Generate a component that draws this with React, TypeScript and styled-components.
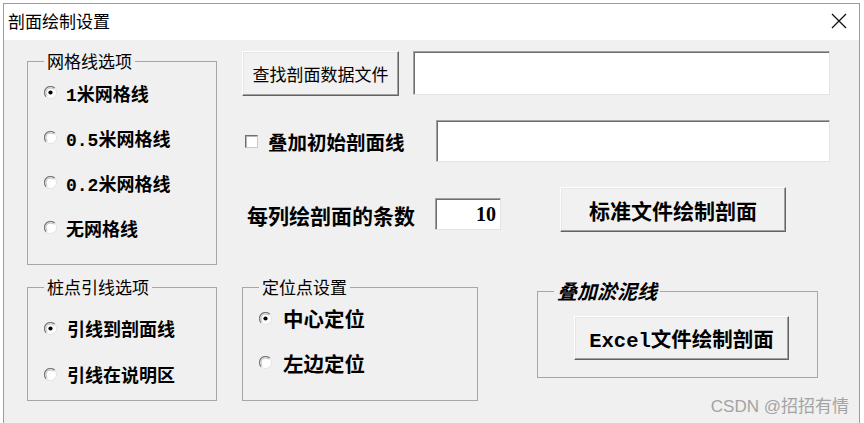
import React from 'react';
import styled, { createGlobalStyle } from 'styled-components';

const CJK = '"Noto Sans CJK SC", "Liberation Sans", sans-serif';
const MIXED = '"Liberation Mono", "Noto Sans CJK SC", monospace';

const GlobalStyle = createGlobalStyle`
  html, body {
    margin: 0;
    padding: 0;
    background: #ffffff;
    overflow: hidden;
  }
  body {
    font-family: ${CJK};
    color: #000;
  }
`;

const Window = styled.div`
  position: relative;
  margin: 3px 0 0 3px;
  width: 857px;
  height: 420px;
  box-sizing: border-box;
  border: 1px solid #9c9c9c;
  border-bottom: none;
  background: #f0f0f0;
  display: flex;
  flex-direction: column;
`;

const TitleBar = styled.div`
  height: 36px;
  flex: none;
  background: #ffffff;
  display: flex;
  align-items: center;
  justify-content: space-between;
  padding: 0 12px 3px 4px;
  box-sizing: border-box;
`;

const Title = styled.span`
  font-size: 17px;
  line-height: 20px;
`;

const Body = styled.div`
  display: flex;
  padding: 12px 0 0 23px;
`;

const LeftCol = styled.div`
  width: 190px;
  display: flex;
  flex-direction: column;
  gap: 13px;
`;

const RightCol = styled.div`
  margin: -1px 0 0 25px;
  width: 588px;
  display: flex;
  flex-direction: column;
`;

// group box (fieldset) with etched border
const Group = styled.fieldset<{ $w: number; $h: number; $top?: number }>`
  margin: 0;
  padding: ${(p) => p.$top || 0}px 0 0 16px;
  width: ${(p) => p.$w}px;
  height: ${(p) => p.$h}px;
  box-sizing: border-box;
  border: 1px solid #a6a6a6;
  min-width: 0;
`;

const Legend = styled.legend<{ $italic?: boolean }>`
  margin-left: 0;
  padding: 0 3px;
  font-size: ${(p) => (p.$italic ? '20px' : '17px')};
  line-height: ${(p) => (p.$italic ? '22px' : '18px')};
  font-weight: ${(p) => (p.$italic ? 700 : 400)};
  font-style: ${(p) => (p.$italic ? 'italic' : 'normal')};
`;

const OptionRow = styled.label<{ $h: number; $gap: number; $size: number }>`
  display: flex;
  align-items: center;
  height: ${(p) => p.$h}px;
  gap: ${(p) => p.$gap}px;
  font-family: ${MIXED};
  font-size: ${(p) => p.$size}px;
  font-weight: 700;
  white-space: nowrap;
`;

const OptionList = styled.div<{ $top: number }>`
  display: flex;
  flex-direction: column;
  padding-top: ${(p) => p.$top}px;
`;

const Button = styled.button<{ $w: number; $h: number; $bold?: boolean; $size: number }>`
  width: ${(p) => p.$w}px;
  height: ${(p) => p.$h}px;
  flex: none;
  padding: 0;
  background: #f1f1f1;
  border: 1px solid;
  border-color: #ffffff #646464 #646464 #ffffff;
  box-shadow: inset -1px -1px #a0a0a0, inset 1px 1px #e6e6e6;
  font-family: ${MIXED};
  font-size: ${(p) => p.$size}px;
  font-weight: ${(p) => (p.$bold ? 700 : 400)};
  color: #000;
  white-space: nowrap;
`;

const TextBox = styled.div<{ $w: number; $h: number }>`
  width: ${(p) => p.$w}px;
  height: ${(p) => p.$h}px;
  flex: none;
  box-sizing: border-box;
  background: #ffffff;
  border: 1px solid;
  border-color: #a0a0a0 #e3e3e3 #e3e3e3 #a0a0a0;
  box-shadow: inset 1px 1px #6e6e6e;
`;

const NumberBox = styled(TextBox)`
  margin-top: 11px;
  display: flex;
  align-items: center;
  justify-content: flex-end;
  padding-right: 4px;
  font-family: "Liberation Serif", serif;
  font-size: 20px;
  font-weight: 700;
`;

const Row = styled.div<{ $top: number; $h: number }>`
  display: flex;
  align-items: flex-start;
  margin-top: ${(p) => p.$top}px;
  height: ${(p) => p.$h}px;
`;

const CheckLabel = styled.label`
  width: 194px;
  display: flex;
  align-items: center;
  gap: 10px;
  padding: 0 0 0 3px;
  height: 42px;
  font-size: 19.5px;
  font-weight: 700;
  white-space: nowrap;
`;

const CheckBox = styled.span`
  width: 13px;
  height: 13px;
  box-sizing: border-box;
  background: #fff;
  border: 1px solid;
  border-color: #6f6f6f #c8c8c8 #c8c8c8 #6f6f6f;
  box-shadow: inset 1px 1px #b4b4b4;
  flex: none;
`;

const CountLabel = styled.span`
  width: 188px;
  padding-left: 5px;
  margin-top: 14px;
  font-size: 21px;
  line-height: 29px;
  font-weight: 700;
  white-space: nowrap;
`;

const Watermark = styled.div`
  position: absolute;
  right: 10px;
  bottom: 6px;
  font-family: "Liberation Sans", "Noto Sans CJK SC", sans-serif;
  font-size: 17px;
  color: #a3a3a3;
`;

function Radio(props: { checked?: boolean }) {
  return (
    <svg width="13" height="13" viewBox="0 0 13 13" style={{ flex: 'none' }}>
      <circle cx="6.5" cy="6.5" r="6" fill="#ffffff" />
      <path d="M10.8 2.2 A6 6 0 0 0 2.2 10.8" stroke="#7a7a7a" strokeWidth="1.3" fill="none" />
      <path d="M9.7 3.3 A4.5 4.5 0 0 0 3.3 9.7" stroke="#b8b8b8" strokeWidth="1" fill="none" />
      <path d="M10.8 2.2 A6 6 0 0 1 2.2 10.8" stroke="#e2e2e2" strokeWidth="1" fill="none" />
      {props.checked && <circle cx="6.5" cy="6.5" r="2.1" fill="#000" />}
    </svg>
  );
}

function CloseIcon() {
  return (
    <svg width="16" height="16" viewBox="0 0 16 16">
      <path d="M1 1 L15 15 M15 1 L1 15" stroke="#111" strokeWidth="1.3" />
    </svg>
  );
}

const gridOptions = ['1米网格线', '0.5米网格线', '0.2米网格线', '无网格线'];

export default function App() {
  return (
    <>
      <GlobalStyle />
      <Window>
        <TitleBar>
          <Title>剖面绘制设置</Title>
          <CloseIcon />
        </TitleBar>
        <Body>
          <LeftCol>
            <Group $w={190} $h={213}>
              <Legend>网格线选项</Legend>
              <OptionList $top={0}>
                {gridOptions.map((o, i) => (
                  <OptionRow key={o} $h={45} $gap={9} $size={18}>
                    <Radio checked={i === 0} />
                    {o}
                  </OptionRow>
                ))}
              </OptionList>
            </Group>
            <Group $w={190} $h={123}>
              <Legend>桩点引线选项</Legend>
              <OptionList $top={9}>
                <OptionRow $h={46} $gap={10} $size={18}>
                  <Radio checked />
                  引线到剖面线
                </OptionRow>
                <OptionRow $h={46} $gap={10} $size={18}>
                  <Radio />
                  引线在说明区
                </OptionRow>
              </OptionList>
            </Group>
          </LeftCol>

          <RightCol>
            <Row $top={0} $h={45}>
              <Button $w={157} $h={45} $size={17}>
                查找剖面数据文件
              </Button>
              <TextBox $w={417} $h={44} style={{ marginLeft: 14 }} />
            </Row>

            <Row $top={24} $h={42}>
              <CheckLabel>
                <CheckBox />
                叠加初始剖面线
              </CheckLabel>
              <TextBox $w={394} $h={42} />
            </Row>

            <Row $top={25} $h={45}>
              <CountLabel>每列绘剖面的条数</CountLabel>
              <NumberBox $w={66} $h={32}>
                10
              </NumberBox>
              <Button $w={226} $h={45} $bold $size={21} style={{ marginLeft: 59 }}>
                标准文件绘制剖面
              </Button>
            </Row>

            <Row $top={46} $h={123}>
              <Group $w={236} $h={123}>
                <Legend>定位点设置</Legend>
                <OptionList $top={0}>
                  <OptionRow $h={44} $gap={11} $size={20.5}>
                    <Radio checked />
                    中心定位
                  </OptionRow>
                  <OptionRow $h={45} $gap={11} $size={20.5}>
                    <Radio />
                    左边定位
                  </OptionRow>
                </OptionList>
              </Group>
              <Group $w={281} $h={98} $top={14} style={{ marginLeft: 59, marginTop: 2 }}>
                <Legend $italic>叠加淤泥线</Legend>
                <Button $w={215} $h={44} $bold $size={20.5} style={{ marginLeft: 20 }}>
                  Excel文件绘制剖面
                </Button>
              </Group>
            </Row>
          </RightCol>
        </Body>
        <Watermark>CSDN @招招有情</Watermark>
      </Window>
    </>
  );
}
